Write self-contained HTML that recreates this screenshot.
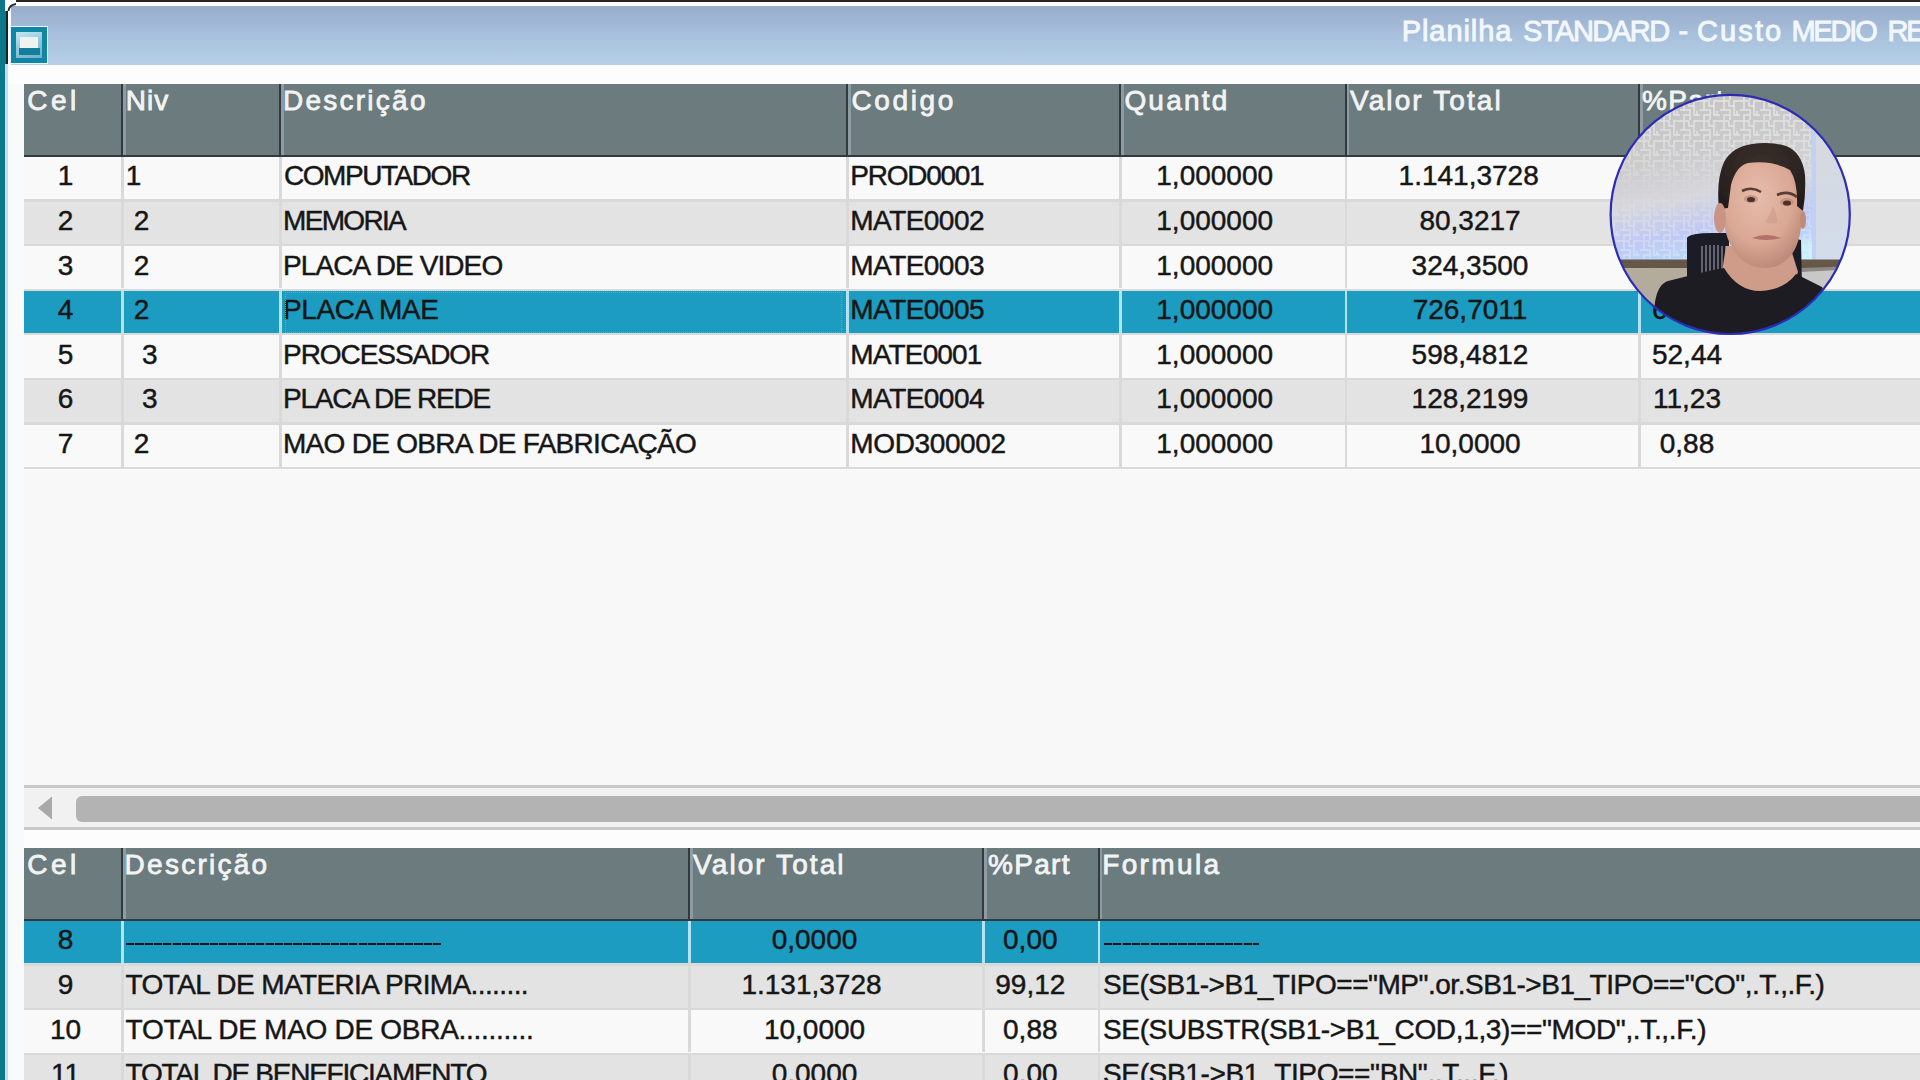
<!DOCTYPE html>
<html><head><meta charset="utf-8">
<style>
html,body{margin:0;padding:0;}
body{width:1920px;height:1080px;overflow:hidden;position:relative;background:#fafafa;font-family:"Liberation Sans",sans-serif;}
.r{position:absolute;}
.t{position:absolute;white-space:pre;line-height:1;-webkit-text-stroke:0.45px #161616;}
</style></head><body>
<div class="r" style="left:0;top:0;width:1920px;height:84px;background:#ffffff;"></div>
<div class="r" style="left:16px;top:0;width:1904px;height:1.8px;background:#2b2427;"></div>
<div class="r" style="left:11.4px;top:5.5px;width:1908.6px;height:59px;background:linear-gradient(#99adcb,#a7c0dc 50%,#b8d0e7);"></div>
<div class="r" style="left:7.5px;top:64.5px;width:1912.5px;height:19.5px;background:#fdfdfd;"></div>
<div class="r" style="left:7.5px;top:84px;width:16.5px;height:996px;background:#f9fafb;"></div>
<div class="r" style="left:24px;top:470px;width:1896px;height:315px;background:#f8f8f8;"></div>
<div class="r" style="left:0;top:0;width:5px;height:1080px;background:#0c7788;"></div>
<div class="r" style="left:5px;top:11px;width:1.5px;height:53px;background:#0c7788;"></div>
<div class="r" style="left:6.3px;top:11px;width:1.6px;height:53px;background:#14222c;"></div>
<div class="r" style="left:5px;top:64px;width:2.8px;height:1016px;background:#c0dcf4;"></div>
<svg class="r" style="left:7px;top:2px;" width="10" height="10"><path d="M1.5 9 Q2 3 9 2" stroke="#2a2a2e" stroke-width="1.8" fill="none"/></svg>
<div class="r" style="left:10px;top:26px;width:38px;height:37.5px;background:#e8f4ff;"></div>
<div class="r" style="left:11px;top:27px;width:36px;height:35.5px;background:#0f86a6;"></div>
<div class="r" style="left:16px;top:32px;width:26px;height:26px;background:linear-gradient(160deg,#c4e6f2,#8fc4d8 55%,#6fb0c8);"></div>
<div class="r" style="left:20px;top:37px;width:17.5px;height:11px;background:#eef3f2;"></div>
<div class="r" style="left:18.5px;top:48px;width:21.5px;height:6.5px;background:#147f9c;"></div>
<div class="t" style="left:1401.70px;top:17.25px;font-size:29px;color:#f3f7fc;letter-spacing:0.929px;-webkit-text-stroke:0.9px #f3f7fc;">Planilha</div>
<div class="t" style="left:1523.00px;top:17.25px;font-size:29px;color:#f3f7fc;letter-spacing:-1.457px;-webkit-text-stroke:0.9px #f3f7fc;">STANDARD</div>
<div class="t" style="left:1678.60px;top:17.25px;font-size:29px;color:#f3f7fc;-webkit-text-stroke:0.9px #f3f7fc;">-</div>
<div class="t" style="left:1696.90px;top:17.25px;font-size:29px;color:#f3f7fc;letter-spacing:2.15px;-webkit-text-stroke:0.9px #f3f7fc;">Custo</div>
<div class="t" style="left:1791.40px;top:17.25px;font-size:29px;color:#f3f7fc;letter-spacing:-2.175px;-webkit-text-stroke:0.9px #f3f7fc;">MEDIO</div>
<div class="t" style="left:1887.50px;top:17.25px;font-size:29px;color:#f3f7fc;letter-spacing:-2.175px;-webkit-text-stroke:0.9px #f3f7fc;">RE</div>

<div class="r" style="left:24.00px;top:84.00px;width:1896.00px;height:71.00px;background:#6c7b7e;"></div>
<div class="r" style="left:24.00px;top:155.00px;width:1896.00px;height:2.00px;background:#303a3f;"></div>
<div class="r" style="left:121.00px;top:84.00px;width:2.00px;height:73.00px;background:#303a3f;"></div>
<div class="r" style="left:123.00px;top:84.00px;width:2.50px;height:71.00px;background:#8e9ca1;"></div>
<div class="r" style="left:279.00px;top:84.00px;width:2.00px;height:73.00px;background:#303a3f;"></div>
<div class="r" style="left:281.00px;top:84.00px;width:2.50px;height:71.00px;background:#8e9ca1;"></div>
<div class="r" style="left:846.00px;top:84.00px;width:2.00px;height:73.00px;background:#303a3f;"></div>
<div class="r" style="left:848.00px;top:84.00px;width:2.50px;height:71.00px;background:#8e9ca1;"></div>
<div class="r" style="left:1119.00px;top:84.00px;width:2.00px;height:73.00px;background:#303a3f;"></div>
<div class="r" style="left:1121.00px;top:84.00px;width:2.50px;height:71.00px;background:#8e9ca1;"></div>
<div class="r" style="left:1344.50px;top:84.00px;width:2.00px;height:73.00px;background:#303a3f;"></div>
<div class="r" style="left:1346.50px;top:84.00px;width:2.50px;height:71.00px;background:#8e9ca1;"></div>
<div class="r" style="left:1638.00px;top:84.00px;width:2.00px;height:73.00px;background:#303a3f;"></div>
<div class="r" style="left:1640.00px;top:84.00px;width:2.50px;height:71.00px;background:#8e9ca1;"></div>
<div class="t" style="left:27.30px;top:86.80px;font-size:28px;color:#f2f4f4;letter-spacing:3.45px;-webkit-text-stroke:0.8px #f2f4f4;">Cel</div>
<div class="t" style="left:125.80px;top:86.80px;font-size:28px;color:#f2f4f4;letter-spacing:1.05px;-webkit-text-stroke:0.8px #f2f4f4;">Niv</div>
<div class="t" style="left:283.00px;top:86.80px;font-size:28px;color:#f2f4f4;letter-spacing:2.25px;-webkit-text-stroke:0.8px #f2f4f4;">Descrição</div>
<div class="t" style="left:851.50px;top:86.80px;font-size:28px;color:#f2f4f4;letter-spacing:2.6px;-webkit-text-stroke:0.8px #f2f4f4;">Codigo</div>
<div class="t" style="left:1124.40px;top:86.80px;font-size:28px;color:#f2f4f4;letter-spacing:2.2px;-webkit-text-stroke:0.8px #f2f4f4;">Quantd</div>
<div class="t" style="left:1350.00px;top:86.80px;font-size:28px;color:#f2f4f4;letter-spacing:2.1px;-webkit-text-stroke:0.8px #f2f4f4;">Valor Total</div>
<div class="t" style="left:1642.00px;top:86.80px;font-size:28px;color:#f2f4f4;letter-spacing:1.3px;-webkit-text-stroke:0.8px #f2f4f4;">%Part</div>
<div class="r" style="left:24.00px;top:157.00px;width:1896.00px;height:42.30px;background:#f9f9f9;"></div>
<div class="r" style="left:24.00px;top:199.30px;width:1896.00px;height:2.30px;background:#d9d9d9;"></div>
<div class="r" style="left:121.00px;top:157.00px;width:2.50px;height:42.30px;background:#d9d9d9;"></div>
<div class="r" style="left:279.00px;top:157.00px;width:2.50px;height:42.30px;background:#d9d9d9;"></div>
<div class="r" style="left:846.00px;top:157.00px;width:2.50px;height:42.30px;background:#d9d9d9;"></div>
<div class="r" style="left:1119.00px;top:157.00px;width:2.50px;height:42.30px;background:#d9d9d9;"></div>
<div class="r" style="left:1344.50px;top:157.00px;width:2.50px;height:42.30px;background:#d9d9d9;"></div>
<div class="r" style="left:1638.00px;top:157.00px;width:2.50px;height:42.30px;background:#d9d9d9;"></div>
<div class="t" style="left:-84.40px;width:300px;text-align:center;top:162.30px;font-size:28px;color:#161616;">1</div>
<div class="t" style="left:-16.50px;width:300px;text-align:center;top:162.30px;font-size:28px;color:#161616;">1</div>
<div class="t" style="left:284.00px;top:162.30px;font-size:28px;color:#161616;letter-spacing:-1.444px;">COMPUTADOR</div>
<div class="t" style="left:850.30px;top:162.30px;font-size:28px;color:#161616;letter-spacing:-1.257px;">PROD0001</div>
<div class="t" style="left:1064.70px;width:300px;text-align:center;top:162.30px;font-size:28px;color:#161616;">1,000000</div>
<div class="t" style="left:1318.70px;width:300px;text-align:center;top:162.30px;font-size:28px;color:#161616;">1.141,3728</div>
<div class="t" style="left:1537.00px;width:300px;text-align:center;top:162.30px;font-size:28px;color:#161616;">100,00</div>
<div class="r" style="left:24.00px;top:201.60px;width:1896.00px;height:42.30px;background:#e3e3e3;"></div>
<div class="r" style="left:24.00px;top:243.90px;width:1896.00px;height:2.30px;background:#d9d9d9;"></div>
<div class="r" style="left:121.00px;top:201.60px;width:2.50px;height:42.30px;background:#d9d9d9;"></div>
<div class="r" style="left:279.00px;top:201.60px;width:2.50px;height:42.30px;background:#d9d9d9;"></div>
<div class="r" style="left:846.00px;top:201.60px;width:2.50px;height:42.30px;background:#d9d9d9;"></div>
<div class="r" style="left:1119.00px;top:201.60px;width:2.50px;height:42.30px;background:#d9d9d9;"></div>
<div class="r" style="left:1344.50px;top:201.60px;width:2.50px;height:42.30px;background:#d9d9d9;"></div>
<div class="r" style="left:1638.00px;top:201.60px;width:2.50px;height:42.30px;background:#d9d9d9;"></div>
<div class="t" style="left:-84.40px;width:300px;text-align:center;top:206.90px;font-size:28px;color:#161616;">2</div>
<div class="t" style="left:-8.40px;width:300px;text-align:center;top:206.90px;font-size:28px;color:#161616;">2</div>
<div class="t" style="left:283.00px;top:206.90px;font-size:28px;color:#161616;letter-spacing:-1.667px;">MEMORIA</div>
<div class="t" style="left:850.30px;top:206.90px;font-size:28px;color:#161616;letter-spacing:-0.543px;">MATE0002</div>
<div class="t" style="left:1064.70px;width:300px;text-align:center;top:206.90px;font-size:28px;color:#161616;">1,000000</div>
<div class="t" style="left:1320.00px;width:300px;text-align:center;top:206.90px;font-size:28px;color:#161616;">80,3217</div>
<div class="t" style="left:1537.00px;width:300px;text-align:center;top:206.90px;font-size:28px;color:#161616;">7,04</div>
<div class="r" style="left:24.00px;top:246.20px;width:1896.00px;height:42.30px;background:#f9f9f9;"></div>
<div class="r" style="left:24.00px;top:288.50px;width:1896.00px;height:2.30px;background:#d9d9d9;"></div>
<div class="r" style="left:121.00px;top:246.20px;width:2.50px;height:42.30px;background:#d9d9d9;"></div>
<div class="r" style="left:279.00px;top:246.20px;width:2.50px;height:42.30px;background:#d9d9d9;"></div>
<div class="r" style="left:846.00px;top:246.20px;width:2.50px;height:42.30px;background:#d9d9d9;"></div>
<div class="r" style="left:1119.00px;top:246.20px;width:2.50px;height:42.30px;background:#d9d9d9;"></div>
<div class="r" style="left:1344.50px;top:246.20px;width:2.50px;height:42.30px;background:#d9d9d9;"></div>
<div class="r" style="left:1638.00px;top:246.20px;width:2.50px;height:42.30px;background:#d9d9d9;"></div>
<div class="t" style="left:-84.40px;width:300px;text-align:center;top:251.50px;font-size:28px;color:#161616;">3</div>
<div class="t" style="left:-8.40px;width:300px;text-align:center;top:251.50px;font-size:28px;color:#161616;">2</div>
<div class="t" style="left:283.00px;top:251.50px;font-size:28px;color:#161616;letter-spacing:-0.9px;">PLACA DE VIDEO</div>
<div class="t" style="left:850.30px;top:251.50px;font-size:28px;color:#161616;letter-spacing:-0.543px;">MATE0003</div>
<div class="t" style="left:1064.70px;width:300px;text-align:center;top:251.50px;font-size:28px;color:#161616;">1,000000</div>
<div class="t" style="left:1320.00px;width:300px;text-align:center;top:251.50px;font-size:28px;color:#161616;">324,3500</div>
<div class="t" style="left:1537.00px;width:300px;text-align:center;top:251.50px;font-size:28px;color:#161616;">28,41</div>
<div class="r" style="left:24.00px;top:290.80px;width:1896.00px;height:42.30px;background:#1c9cc0;"></div>
<div class="r" style="left:24.00px;top:333.10px;width:1896.00px;height:2.30px;background:#d9d9d9;"></div>
<div class="r" style="left:121.00px;top:290.80px;width:2.50px;height:42.30px;background:#b3e3f3;"></div>
<div class="r" style="left:279.00px;top:290.80px;width:2.50px;height:42.30px;background:#b3e3f3;"></div>
<div class="r" style="left:846.00px;top:290.80px;width:2.50px;height:42.30px;background:#b3e3f3;"></div>
<div class="r" style="left:1119.00px;top:290.80px;width:2.50px;height:42.30px;background:#b3e3f3;"></div>
<div class="r" style="left:1344.50px;top:290.80px;width:2.50px;height:42.30px;background:#b3e3f3;"></div>
<div class="r" style="left:1638.00px;top:290.80px;width:2.50px;height:42.30px;background:#b3e3f3;"></div>
<div class="t" style="left:-84.40px;width:300px;text-align:center;top:296.10px;font-size:28px;color:#161616;">4</div>
<div class="t" style="left:-8.40px;width:300px;text-align:center;top:296.10px;font-size:28px;color:#161616;">2</div>
<div class="t" style="left:283.00px;top:296.10px;font-size:28px;color:#161616;letter-spacing:-0.362px;">PLACA MAE</div>
<div class="t" style="left:850.30px;top:296.10px;font-size:28px;color:#161616;letter-spacing:-0.543px;">MATE0005</div>
<div class="t" style="left:1064.70px;width:300px;text-align:center;top:296.10px;font-size:28px;color:#161616;">1,000000</div>
<div class="t" style="left:1320.00px;width:300px;text-align:center;top:296.10px;font-size:28px;color:#161616;">726,7011</div>
<div class="t" style="left:1537.00px;width:300px;text-align:center;top:296.10px;font-size:28px;color:#161616;">63,67</div>
<div class="r" style="left:24.00px;top:335.40px;width:1896.00px;height:42.30px;background:#f9f9f9;"></div>
<div class="r" style="left:24.00px;top:377.70px;width:1896.00px;height:2.30px;background:#d9d9d9;"></div>
<div class="r" style="left:121.00px;top:335.40px;width:2.50px;height:42.30px;background:#d9d9d9;"></div>
<div class="r" style="left:279.00px;top:335.40px;width:2.50px;height:42.30px;background:#d9d9d9;"></div>
<div class="r" style="left:846.00px;top:335.40px;width:2.50px;height:42.30px;background:#d9d9d9;"></div>
<div class="r" style="left:1119.00px;top:335.40px;width:2.50px;height:42.30px;background:#d9d9d9;"></div>
<div class="r" style="left:1344.50px;top:335.40px;width:2.50px;height:42.30px;background:#d9d9d9;"></div>
<div class="r" style="left:1638.00px;top:335.40px;width:2.50px;height:42.30px;background:#d9d9d9;"></div>
<div class="t" style="left:-84.40px;width:300px;text-align:center;top:340.70px;font-size:28px;color:#161616;">5</div>
<div class="t" style="left:-0.30px;width:300px;text-align:center;top:340.70px;font-size:28px;color:#161616;">3</div>
<div class="t" style="left:283.00px;top:340.70px;font-size:28px;color:#161616;letter-spacing:-1.05px;">PROCESSADOR</div>
<div class="t" style="left:850.30px;top:340.70px;font-size:28px;color:#161616;letter-spacing:-0.843px;">MATE0001</div>
<div class="t" style="left:1064.70px;width:300px;text-align:center;top:340.70px;font-size:28px;color:#161616;">1,000000</div>
<div class="t" style="left:1320.00px;width:300px;text-align:center;top:340.70px;font-size:28px;color:#161616;">598,4812</div>
<div class="t" style="left:1537.00px;width:300px;text-align:center;top:340.70px;font-size:28px;color:#161616;">52,44</div>
<div class="r" style="left:24.00px;top:380.00px;width:1896.00px;height:42.30px;background:#e3e3e3;"></div>
<div class="r" style="left:24.00px;top:422.30px;width:1896.00px;height:2.30px;background:#d9d9d9;"></div>
<div class="r" style="left:121.00px;top:380.00px;width:2.50px;height:42.30px;background:#d9d9d9;"></div>
<div class="r" style="left:279.00px;top:380.00px;width:2.50px;height:42.30px;background:#d9d9d9;"></div>
<div class="r" style="left:846.00px;top:380.00px;width:2.50px;height:42.30px;background:#d9d9d9;"></div>
<div class="r" style="left:1119.00px;top:380.00px;width:2.50px;height:42.30px;background:#d9d9d9;"></div>
<div class="r" style="left:1344.50px;top:380.00px;width:2.50px;height:42.30px;background:#d9d9d9;"></div>
<div class="r" style="left:1638.00px;top:380.00px;width:2.50px;height:42.30px;background:#d9d9d9;"></div>
<div class="t" style="left:-84.40px;width:300px;text-align:center;top:385.30px;font-size:28px;color:#161616;">6</div>
<div class="t" style="left:-0.30px;width:300px;text-align:center;top:385.30px;font-size:28px;color:#161616;">3</div>
<div class="t" style="left:283.00px;top:385.30px;font-size:28px;color:#161616;letter-spacing:-1.192px;">PLACA DE REDE</div>
<div class="t" style="left:850.30px;top:385.30px;font-size:28px;color:#161616;letter-spacing:-0.543px;">MATE0004</div>
<div class="t" style="left:1064.70px;width:300px;text-align:center;top:385.30px;font-size:28px;color:#161616;">1,000000</div>
<div class="t" style="left:1320.00px;width:300px;text-align:center;top:385.30px;font-size:28px;color:#161616;">128,2199</div>
<div class="t" style="left:1537.00px;width:300px;text-align:center;top:385.30px;font-size:28px;color:#161616;">11,23</div>
<div class="r" style="left:24.00px;top:424.60px;width:1896.00px;height:42.30px;background:#f9f9f9;"></div>
<div class="r" style="left:24.00px;top:466.90px;width:1896.00px;height:2.30px;background:#d9d9d9;"></div>
<div class="r" style="left:121.00px;top:424.60px;width:2.50px;height:42.30px;background:#d9d9d9;"></div>
<div class="r" style="left:279.00px;top:424.60px;width:2.50px;height:42.30px;background:#d9d9d9;"></div>
<div class="r" style="left:846.00px;top:424.60px;width:2.50px;height:42.30px;background:#d9d9d9;"></div>
<div class="r" style="left:1119.00px;top:424.60px;width:2.50px;height:42.30px;background:#d9d9d9;"></div>
<div class="r" style="left:1344.50px;top:424.60px;width:2.50px;height:42.30px;background:#d9d9d9;"></div>
<div class="r" style="left:1638.00px;top:424.60px;width:2.50px;height:42.30px;background:#d9d9d9;"></div>
<div class="t" style="left:-84.40px;width:300px;text-align:center;top:429.90px;font-size:28px;color:#161616;">7</div>
<div class="t" style="left:-8.40px;width:300px;text-align:center;top:429.90px;font-size:28px;color:#161616;">2</div>
<div class="t" style="left:283.00px;top:429.90px;font-size:28px;color:#161616;letter-spacing:-0.713px;">MAO DE OBRA DE FABRICAÇÃO</div>
<div class="t" style="left:850.30px;top:429.90px;font-size:28px;color:#161616;letter-spacing:-0.375px;">MOD300002</div>
<div class="t" style="left:1064.70px;width:300px;text-align:center;top:429.90px;font-size:28px;color:#161616;">1,000000</div>
<div class="t" style="left:1320.00px;width:300px;text-align:center;top:429.90px;font-size:28px;color:#161616;">10,0000</div>
<div class="t" style="left:1537.00px;width:300px;text-align:center;top:429.90px;font-size:28px;color:#161616;">0,88</div>
<div class="r" style="left:284.5px;top:292px;width:557.5px;height:40.5px;border:1.8px dotted #e8786a;box-sizing:border-box;"></div>
<div class="r" style="left:24.00px;top:848.00px;width:1896.00px;height:71.00px;background:#6c7b7e;"></div>
<div class="r" style="left:24.00px;top:919.00px;width:1896.00px;height:2.00px;background:#303a3f;"></div>
<div class="r" style="left:121.00px;top:848.00px;width:2.00px;height:73.00px;background:#303a3f;"></div>
<div class="r" style="left:123.00px;top:848.00px;width:2.50px;height:71.00px;background:#8e9ca1;"></div>
<div class="r" style="left:688.00px;top:848.00px;width:2.00px;height:73.00px;background:#303a3f;"></div>
<div class="r" style="left:690.00px;top:848.00px;width:2.50px;height:71.00px;background:#8e9ca1;"></div>
<div class="r" style="left:982.00px;top:848.00px;width:2.00px;height:73.00px;background:#303a3f;"></div>
<div class="r" style="left:984.00px;top:848.00px;width:2.50px;height:71.00px;background:#8e9ca1;"></div>
<div class="r" style="left:1097.50px;top:848.00px;width:2.00px;height:73.00px;background:#303a3f;"></div>
<div class="r" style="left:1099.50px;top:848.00px;width:2.50px;height:71.00px;background:#8e9ca1;"></div>
<div class="t" style="left:27.30px;top:850.80px;font-size:28px;color:#f2f4f4;letter-spacing:3.45px;-webkit-text-stroke:0.8px #f2f4f4;">Cel</div>
<div class="t" style="left:124.60px;top:850.80px;font-size:28px;color:#f2f4f4;letter-spacing:2.25px;-webkit-text-stroke:0.8px #f2f4f4;">Descrição</div>
<div class="t" style="left:693.10px;top:850.80px;font-size:28px;color:#f2f4f4;letter-spacing:2.07px;-webkit-text-stroke:0.8px #f2f4f4;">Valor Total</div>
<div class="t" style="left:988.00px;top:850.80px;font-size:28px;color:#f2f4f4;letter-spacing:1.3px;-webkit-text-stroke:0.8px #f2f4f4;">%Part</div>
<div class="t" style="left:1102.20px;top:850.80px;font-size:28px;color:#f2f4f4;letter-spacing:2.367px;-webkit-text-stroke:0.8px #f2f4f4;">Formula</div>
<div class="r" style="left:24.00px;top:921.00px;width:1896.00px;height:42.30px;background:#1c9cc0;"></div>
<div class="r" style="left:24.00px;top:963.30px;width:1896.00px;height:2.30px;background:#d9d9d9;"></div>
<div class="r" style="left:121.00px;top:921.00px;width:2.50px;height:42.30px;background:#b3e3f3;"></div>
<div class="r" style="left:688.00px;top:921.00px;width:2.50px;height:42.30px;background:#b3e3f3;"></div>
<div class="r" style="left:982.00px;top:921.00px;width:2.50px;height:42.30px;background:#b3e3f3;"></div>
<div class="r" style="left:1097.50px;top:921.00px;width:2.50px;height:42.30px;background:#b3e3f3;"></div>
<div class="t" style="left:-84.40px;width:300px;text-align:center;top:926.30px;font-size:28px;color:#161616;">8</div>
<div class="t" style="left:664.50px;width:300px;text-align:center;top:926.30px;font-size:28px;color:#161616;">0,0000</div>
<div class="t" style="left:880.30px;width:300px;text-align:center;top:926.30px;font-size:28px;color:#161616;">0,00</div>
<div class="r" style="left:24.00px;top:965.60px;width:1896.00px;height:42.30px;background:#e3e3e3;"></div>
<div class="r" style="left:24.00px;top:1007.90px;width:1896.00px;height:2.30px;background:#d9d9d9;"></div>
<div class="r" style="left:121.00px;top:965.60px;width:2.50px;height:42.30px;background:#d9d9d9;"></div>
<div class="r" style="left:688.00px;top:965.60px;width:2.50px;height:42.30px;background:#d9d9d9;"></div>
<div class="r" style="left:982.00px;top:965.60px;width:2.50px;height:42.30px;background:#d9d9d9;"></div>
<div class="r" style="left:1097.50px;top:965.60px;width:2.50px;height:42.30px;background:#d9d9d9;"></div>
<div class="t" style="left:-84.40px;width:300px;text-align:center;top:970.90px;font-size:28px;color:#161616;">9</div>
<div class="t" style="left:125.60px;top:970.90px;font-size:28px;color:#161616;letter-spacing:-0.607px;">TOTAL DE MATERIA PRIMA........</div>
<div class="t" style="left:661.50px;width:300px;text-align:center;top:970.90px;font-size:28px;color:#161616;">1.131,3728</div>
<div class="t" style="left:880.30px;width:300px;text-align:center;top:970.90px;font-size:28px;color:#161616;">99,12</div>
<div class="t" style="left:1103.00px;top:970.90px;font-size:28px;color:#161616;letter-spacing:-0.478px;">SE(SB1-&gt;B1_TIPO=="MP".or.SB1-&gt;B1_TIPO=="CO",.T.,.F.)</div>
<div class="r" style="left:24.00px;top:1010.20px;width:1896.00px;height:42.30px;background:#f9f9f9;"></div>
<div class="r" style="left:24.00px;top:1052.50px;width:1896.00px;height:2.30px;background:#d9d9d9;"></div>
<div class="r" style="left:121.00px;top:1010.20px;width:2.50px;height:42.30px;background:#d9d9d9;"></div>
<div class="r" style="left:688.00px;top:1010.20px;width:2.50px;height:42.30px;background:#d9d9d9;"></div>
<div class="r" style="left:982.00px;top:1010.20px;width:2.50px;height:42.30px;background:#d9d9d9;"></div>
<div class="r" style="left:1097.50px;top:1010.20px;width:2.50px;height:42.30px;background:#d9d9d9;"></div>
<div class="t" style="left:-84.40px;width:300px;text-align:center;top:1015.50px;font-size:28px;color:#161616;">10</div>
<div class="t" style="left:125.60px;top:1015.50px;font-size:28px;color:#161616;letter-spacing:-0.283px;">TOTAL DE MAO DE OBRA..........</div>
<div class="t" style="left:664.50px;width:300px;text-align:center;top:1015.50px;font-size:28px;color:#161616;">10,0000</div>
<div class="t" style="left:880.30px;width:300px;text-align:center;top:1015.50px;font-size:28px;color:#161616;">0,88</div>
<div class="t" style="left:1103.00px;top:1015.50px;font-size:28px;color:#161616;letter-spacing:-0.356px;">SE(SUBSTR(SB1-&gt;B1_COD,1,3)=="MOD",.T.,.F.)</div>
<div class="r" style="left:24.00px;top:1054.80px;width:1896.00px;height:42.30px;background:#e3e3e3;"></div>
<div class="r" style="left:24.00px;top:1097.10px;width:1896.00px;height:2.30px;background:#d9d9d9;"></div>
<div class="r" style="left:121.00px;top:1054.80px;width:2.50px;height:42.30px;background:#d9d9d9;"></div>
<div class="r" style="left:688.00px;top:1054.80px;width:2.50px;height:42.30px;background:#d9d9d9;"></div>
<div class="r" style="left:982.00px;top:1054.80px;width:2.50px;height:42.30px;background:#d9d9d9;"></div>
<div class="r" style="left:1097.50px;top:1054.80px;width:2.50px;height:42.30px;background:#d9d9d9;"></div>
<div class="t" style="left:-84.40px;width:300px;text-align:center;top:1060.10px;font-size:28px;color:#161616;">11</div>
<div class="t" style="left:125.60px;top:1060.10px;font-size:28px;color:#161616;letter-spacing:-1.255px;">TOTAL DE BENEFICIAMENTO</div>
<div class="t" style="left:664.50px;width:300px;text-align:center;top:1060.10px;font-size:28px;color:#161616;">0,0000</div>
<div class="t" style="left:880.30px;width:300px;text-align:center;top:1060.10px;font-size:28px;color:#161616;">0,00</div>
<div class="t" style="left:1103.00px;top:1060.10px;font-size:28px;color:#161616;letter-spacing:-0.356px;">SE(SB1-&gt;B1_TIPO=="BN",.T.,.F.)</div>
<div class="r" style="left:126.20px;top:943.00px;width:314.60px;height:2.20px;background:repeating-linear-gradient(90deg,#08141a 0 8.2px,#3d6a78 8.2px 9.3px);"></div>
<div class="r" style="left:1104.00px;top:943.00px;width:155.00px;height:2.20px;background:repeating-linear-gradient(90deg,#08141a 0 8.2px,#3d6a78 8.2px 9.3px);"></div>

<div class="r" style="left:23.5px;top:785px;width:1896.5px;height:2.5px;background:#c9c9c9;"></div>
<div class="r" style="left:23.5px;top:787.5px;width:1896.5px;height:39.5px;background:#f1f1f1;"></div>
<div class="r" style="left:23.5px;top:827px;width:1896.5px;height:2.5px;background:#c9c9c9;"></div>
<div class="r" style="left:23.5px;top:829.5px;width:1896.5px;height:18.5px;background:#fdfdfd;"></div>
<div class="r" style="left:76px;top:795.5px;width:1850px;height:26.5px;background:#b3b3b3;border-radius:6px 0 0 6px;"></div>
<svg class="r" style="left:36px;top:795px;" width="18" height="26"><polygon points="2,13 16,1.5 16,24.5" fill="#a9a9a9"/></svg>
<svg class="r" style="left:1606px;top:90px;" width="250" height="250" viewBox="1606 90 250 250">
<defs><clipPath id="cc"><circle cx="1730.2" cy="214.4" r="119.6"/></clipPath>
<linearGradient id="wall" gradientUnits="userSpaceOnUse" x1="1700" y1="90" x2="1730" y2="260"><stop offset="0" stop-color="#c4c4c4"/><stop offset="0.35" stop-color="#cbcbcc"/><stop offset="0.6" stop-color="#d6d6dc"/><stop offset="0.8" stop-color="#bfc9f4"/><stop offset="0.93" stop-color="#b9d4fa"/><stop offset="1" stop-color="#c4f2fc"/></linearGradient>
<linearGradient id="pan" x1="0" y1="0" x2="0" y2="1"><stop offset="0" stop-color="#d8d8d8"/><stop offset="1" stop-color="#d2dcec"/></linearGradient>
<linearGradient id="mazefade" gradientUnits="userSpaceOnUse" x1="0" y1="90" x2="0" y2="260"><stop offset="0" stop-color="#fff" stop-opacity="0.85"/><stop offset="0.35" stop-color="#fff" stop-opacity="0.6"/><stop offset="0.6" stop-color="#fff" stop-opacity="0.08"/><stop offset="0.8" stop-color="#fff" stop-opacity="0.45"/><stop offset="1" stop-color="#fff" stop-opacity="0.5"/></linearGradient>
<filter id="soft" x="-5%" y="-5%" width="110%" height="110%"><feGaussianBlur stdDeviation="0.7"/></filter>
<mask id="mm"><rect x="1600" y="88" width="260" height="175" fill="url(#mazefade)"/></mask>
<radialGradient id="face" cx="0.45" cy="0.35" r="0.7"><stop offset="0" stop-color="#e6bcac"/><stop offset="0.6" stop-color="#daa894"/><stop offset="1" stop-color="#b98474"/></radialGradient>
<radialGradient id="hair" cx="0.5" cy="0.3" r="0.7"><stop offset="0" stop-color="#3a302b"/><stop offset="1" stop-color="#241e1c"/></radialGradient>
<pattern id="maze" width="20" height="20" patternUnits="userSpaceOnUse"><path d="M0 1h9v5h5v-5h6M4 1v9h6v5h-6v5M14 6v9h6M0 10h4M10 20v-5M17 15v-4" stroke="#eeeef0" stroke-width="1.5" fill="none"/></pattern>
</defs>
<g clip-path="url(#cc)"><g filter="url(#soft)">
<rect x="1600" y="88" width="260" height="175" fill="url(#wall)"/>
<rect x="1600" y="88" width="213" height="171" fill="url(#maze)" mask="url(#mm)"/>
<rect x="1813" y="88" width="45" height="172" fill="url(#pan)"/>
<rect x="1812" y="88" width="4" height="172" fill="#c2d0f4"/>
<path d="M1600 259.5 L1860 259.5 L1860 268 L1760 268 L1700 270 L1650 271 L1600 269 Z" fill="#665848"/>
<rect x="1600" y="268" width="260" height="80" fill="#b4ad9e" />
<path d="M1600 269 L1650 271 L1700 270 L1800 268 L1800 350 L1600 350 Z" fill="#b3ac9c"/>
<path d="M1800 268 L1860 266 L1860 350 L1800 350 Z" fill="#8d8a84"/>
<path d="M1801 272 L1838 270 L1842 300 L1805 298 Z" fill="#c8c8c6"/>
<path d="M1687 238 Q1690 233 1712 233 L1729 233 L1729 290 L1687 290 Z" fill="#1b1e26"/>
<g stroke="#c0c8d8" stroke-width="1.2" opacity="0.7"><path d="M1702 246v28M1706 245v30M1710 245v30M1714 245v30M1718 245v30M1722 246v28M1726 246v26"/></g>
<path d="M1787 237 L1801 240 L1802 290 L1787 290 Z" fill="#1b1e26"/>
<path d="M1726 246 L1722 272 L1740 296 L1790 294 L1798 272 L1790 246 Z" fill="#cf9c8a"/>
<path d="M1722 205 Q1722 168 1740 160 Q1768 154 1792 164 Q1804 175 1802 210 Q1802 240 1792 254 Q1781 268 1766 268 Q1746 268 1735 252 Q1723 236 1722 205 Z" fill="url(#face)"/>
<path d="M1719 209 Q1716 180 1724 162 Q1732 147 1752 144 Q1770 141 1786 146 Q1802 152 1805 175 Q1806 195 1803 211 L1797 206 Q1798 182 1790 170 Q1772 160 1748 163 Q1736 166 1731 185 L1728 208 Z" fill="url(#hair)"/>
<ellipse cx="1720" cy="218" rx="6" ry="15" fill="#c99484"/><ellipse cx="1803" cy="220" rx="3" ry="9" fill="#c08a7a"/>
<ellipse cx="1751" cy="199" rx="7" ry="4" fill="#b88070" opacity="0.6"/><ellipse cx="1751" cy="199.5" rx="4" ry="2.6" fill="#4a302a"/>
<ellipse cx="1787" cy="202" rx="7" ry="4" fill="#b88070" opacity="0.6"/><ellipse cx="1787" cy="203" rx="4" ry="2.6" fill="#4a302a"/>
<path d="M1742 191 Q1752 186 1761 192" stroke="#5a3c32" stroke-width="2.6" fill="none"/>
<path d="M1777 195 Q1788 190 1797 197" stroke="#5a3c32" stroke-width="2.6" fill="none"/>
<path d="M1773 206 Q1777 215 1778 222 Q1772 225 1765 222 Q1770 215 1773 206 Z" fill="#c48c7c" opacity="0.35"/>
<path d="M1752 238 Q1766 232 1781 238 Q1766 242 1752 238 Z" fill="#b27068"/>
<path d="M1650 345 L1655 302 Q1658 284 1668 281 L1700 273 Q1712 270 1724 268 Q1738 291 1760 291 Q1784 290 1796 274 Q1808 280 1822 287 L1850 345 Z" fill="#1b1c20"/>
</g></g>
<circle cx="1730.2" cy="214.4" r="119.6" fill="none" stroke="#2c2cb4" stroke-width="2.2"/>
</svg>

</body></html>
